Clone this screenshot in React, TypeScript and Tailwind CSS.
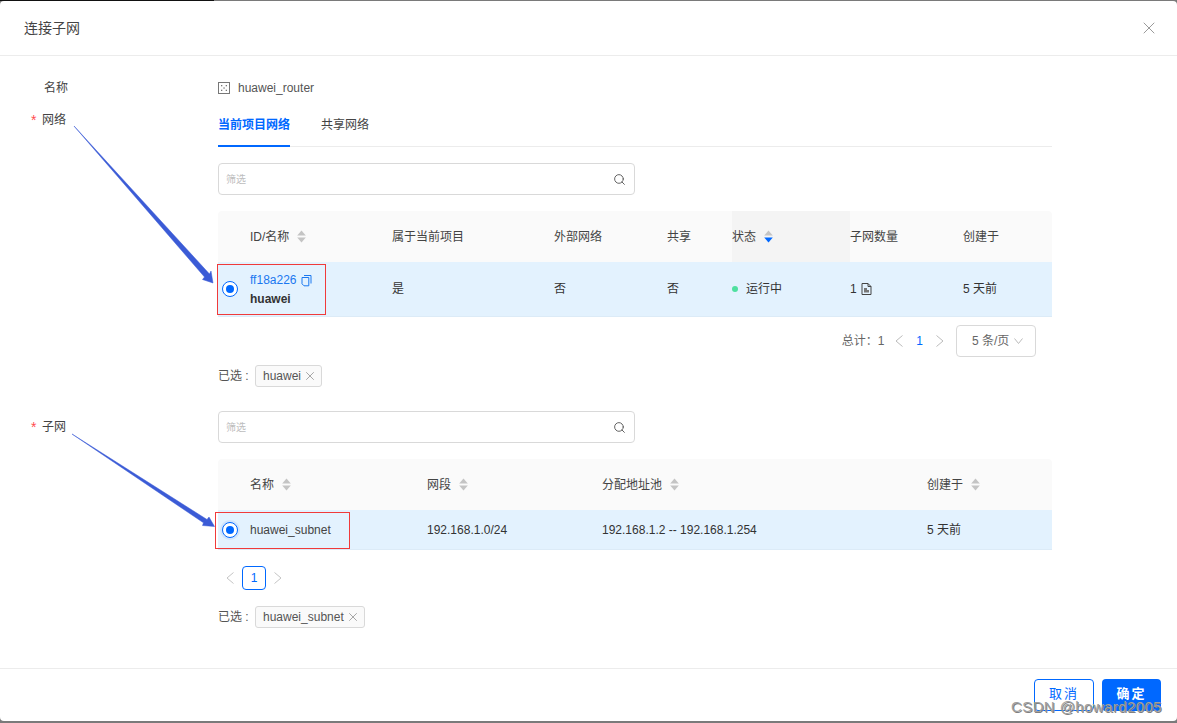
import React from "react";
import { Search, X } from "lucide-react";

const font = "font-['Liberation_Sans','Noto_Sans_CJK_SC',sans-serif]";

function Sort({ active = false }: { active?: boolean }) {
  return (
    <svg width="9" height="13" viewBox="0 0 9 13" className="ml-[8px] shrink-0">
      <path d="M4.5 0.5 L8.8 5.5 L0.2 5.5 Z" fill="#c4c4c4" />
      <path d="M4.5 12.5 L8.8 7.5 L0.2 7.5 Z" fill={active ? "#0068ff" : "#c4c4c4"} />
    </svg>
  );
}

function ChevLeft({ className = "" }: { className?: string }) {
  return (
    <svg width="8" height="12" viewBox="0 0 8 12" fill="none" stroke="currentColor" strokeWidth="1" className={className}>
      <path d="M7.5 0.5 L1 6 L7.5 11.5" />
    </svg>
  );
}

function ChevRight({ className = "" }: { className?: string }) {
  return (
    <svg width="8" height="12" viewBox="0 0 8 12" fill="none" stroke="currentColor" strokeWidth="1" className={className}>
      <path d="M0.5 0.5 L7 6 L0.5 11.5" />
    </svg>
  );
}

function Radio({ halo = false }: { halo?: boolean }) {
  return (
    <span className={`flex h-[20px] w-[20px] items-center justify-center rounded-full ${halo ? "bg-[#cfe4fd]" : ""}`}>
      <span className="flex h-[16px] w-[16px] items-center justify-center rounded-full border border-[#0068ff] bg-white">
        <span className="h-[8px] w-[8px] rounded-full bg-[#0068ff]" />
      </span>
    </span>
  );
}

function SearchBox() {
  return (
    <div className="flex h-[32px] w-[417px] items-center justify-between rounded-[4px] border border-[#d9d9d9] bg-white pl-[7px] pr-[8px]">
      <span className="text-[10px] text-[#bdbdbd]">筛选</span>
      <Search size={13} strokeWidth={1.7} className="text-[#555]" />
    </div>
  );
}

function Tag({ children, w }: { children: React.ReactNode; w: string }) {
  return (
    <div className="flex h-[22px] items-center text-[12px] text-[#555]">
      <span className="mr-[6px] w-[31px]">已选 :</span>
      <span className={`flex h-[22px] items-center justify-between rounded-[3px] border border-[#d9d9d9] bg-[#fafafa] pl-[7px] pr-[4px] ${w}`}>
        {children}
        <X size={14} strokeWidth={1.1} className="text-[#777]" />
      </span>
    </div>
  );
}

function Th({ children, sort, active, className = "" }: { children: React.ReactNode; sort?: boolean; active?: boolean; className?: string }) {
  return (
    <div className={`flex h-full items-center text-[12px] text-[#444] ${className}`}>
      {children}
      {sort && <Sort active={active} />}
    </div>
  );
}

function Label({ children, required, className = "" }: { children: React.ReactNode; required?: boolean; className?: string }) {
  return (
    <div className={`flex items-center text-[12px] text-[#444] ${className}`}>
      {required && <span className="mr-[6px] w-[5px] text-[14px] text-[#ff4d4f]">*</span>}
      {children}
    </div>
  );
}

function Td({ children, className = "" }: { children: React.ReactNode; className?: string }) {
  return <div className={`flex h-full items-center text-[12px] text-[#333] ${className}`}>{children}</div>;
}

export default function App() {
  return (
    <div className={`relative flex h-[723px] w-[1177px] flex-col overflow-hidden bg-[#7a7a7a] pb-[2px] pt-px ${font}`}>
      <div className="absolute left-0 top-0 h-px w-[214px] bg-[#111]" />
      <div className="flex flex-1 flex-col rounded-[4px] bg-white">
        <header className="flex h-[55px] shrink-0 items-center justify-between border-b border-[#ececec] pl-[24px] pr-[18px]">
          <span className="text-[14px] text-[#444]">连接子网</span>
          <X size={20} strokeWidth={0.9} className="text-[#777]" />
        </header>

        <main className="flex flex-1">
          <aside className="relative w-[218px] shrink-0">
            <Label className="ml-[44px] mt-[24px] h-[16px] leading-[16px]">名称</Label>
            <Label required className="ml-[31px] mt-[16px] h-[16px]">网络</Label>
            <Label required className="ml-[31px] mt-[291px] h-[16px]">子网</Label>
          </aside>

          <section className="w-[834px] shrink-0">
            <div className="mt-[24px] flex h-[16px] items-center text-[12px] text-[#555]">
              <svg width="12" height="12" viewBox="0 0 12 12" className="mr-[8px]" fill="none">
                <rect x="0.5" y="0.5" width="11" height="11" stroke="#777" />
                <rect x="3" y="3" width="1.3" height="1.3" fill="#777" />
                <rect x="7.7" y="3" width="1.3" height="1.3" fill="#777" />
                <rect x="5.4" y="5.4" width="1.3" height="1.3" fill="#777" />
                <rect x="3" y="7.7" width="1.3" height="1.3" fill="#777" />
                <rect x="7.7" y="7.7" width="1.3" height="1.3" fill="#777" />
              </svg>
              huawei_router
            </div>

            <div className="mt-[13px] flex h-[38px] border-b border-[#ececec] text-[12px]">
              <div className="-mb-px flex w-[72px] items-center justify-center border-b-2 border-[#0068ff] pb-[5px] font-bold text-[#0068ff]">
                当前项目网络
              </div>
              <div className="ml-[31px] flex items-center pb-[5px] text-[#444]">共享网络</div>
            </div>

            <div className="mt-[16px]">
              <SearchBox />
            </div>

            <div className="mt-[16px]">
              <div className="grid h-[51px] grid-cols-[174px_162px_113px_65px_118px_113px_89px] rounded-t-[4px] bg-[#fafafa]">
                <Th sort className="pl-[32px]">ID/名称</Th>
                <Th>属于当前项目</Th>
                <Th>外部网络</Th>
                <Th>共享</Th>
                <Th sort active className="bg-[#f4f4f4]">状态</Th>
                <Th>子网数量</Th>
                <Th>创建于</Th>
              </div>
              <div className="grid h-[55px] grid-cols-[174px_162px_113px_65px_118px_113px_89px] border-b border-[#dcebf7] bg-[#e3f2fe]">
                <Td>
                  <span className="ml-[2px] mr-[10px]"><Radio /></span>
                  <div className="mt-px leading-[19px]">
                    <div className="flex items-center text-[#1a78f0]">
                      ff18a226
                      <svg width="11" height="13" viewBox="0 0 11 13" fill="none" className="ml-[4px]" stroke="#1a78f0">
                        <path d="M3 1.5 H10 V9.5" />
                        <path d="M1 3.5 H7.8 V11.8 H3 L1 9.8 Z" />
                      </svg>
                    </div>
                    <div className="font-bold text-[#333]">huawei</div>
                  </div>
                </Td>
                <Td>是</Td>
                <Td>否</Td>
                <Td>否</Td>
                <Td>
                  <span className="mr-[8px] h-[6px] w-[6px] rounded-full bg-[#4fe0a0]" />
                  运行中
                </Td>
                <Td>
                  1
                  <svg width="11" height="12" viewBox="0 0 11 12" fill="none" className="ml-[4px]" stroke="#444">
                    <path d="M1 0.5 H7 L10 3.5 V11.5 H1 Z" />
                    <path d="M7 0.5 V3.5 H10" />
                    <path d="M3 5 H6 V7 H8 V9.5 H3 Z" fill="#777" stroke="none" />
                  </svg>
                </Td>
                <Td>5 天前</Td>
              </div>
            </div>

            <div className="mt-[8px] flex h-[32px] items-center justify-end pr-[16px] text-[12px] text-[#666]">
              <span>总计：1</span>
              <ChevLeft className="ml-[11px] text-[#bbb]" />
              <span className="ml-[13px] text-[#0068ff]">1</span>
              <ChevRight className="ml-[13px] text-[#bbb]" />
              <div className="ml-[12px] flex h-[32px] w-[80px] items-center justify-between rounded-[4px] border border-[#d9d9d9] pl-[15px] pr-[12px]">
                5 条/页
                <svg width="9" height="6" viewBox="0 0 9 6" fill="none" stroke="#bbb" strokeWidth="1">
                  <path d="M0.5 0.5 L4.5 5.5 L8.5 0.5" />
                </svg>
              </div>
            </div>

            <div className="mt-[8px]">
              <Tag w="w-[67px]">huawei</Tag>
            </div>

            <div className="mt-[24px]">
              <SearchBox />
            </div>

            <div className="mt-[16px]">
              <div className="grid h-[51px] grid-cols-[209px_175px_325px_125px] rounded-t-[4px] bg-[#fafafa]">
                <Th sort className="pl-[32px]">名称</Th>
                <Th sort>网段</Th>
                <Th sort>分配地址池</Th>
                <Th sort>创建于</Th>
              </div>
              <div className="grid h-[40px] grid-cols-[209px_175px_325px_125px] border-b border-[#dcebf7] bg-[#e3f2fe]">
                <Td>
                  <span className="ml-[2px] mr-[10px]"><Radio halo /></span>
                  <span className="text-[#444]">huawei_subnet</span>
                </Td>
                <Td>192.168.1.0/24</Td>
                <Td>192.168.1.2 -- 192.168.1.254</Td>
                <Td>5 天前</Td>
              </div>
            </div>

            <div className="ml-[8px] mt-[16px] flex h-[24px] items-center text-[12px]">
              <ChevLeft className="text-[#c4c4c4]" />
              <span className="ml-[8px] flex h-[24px] w-[24px] items-center justify-center rounded-[4px] border border-[#0068ff] text-[#0068ff]">1</span>
              <ChevRight className="ml-[8px] text-[#c4c4c4]" />
            </div>

            <div className="mt-[16px]">
              <Tag w="w-[110px]">huawei_subnet</Tag>
            </div>
          </section>
        </main>

        <footer className="flex h-[53px] shrink-0 justify-end gap-[8px] border-t border-[#ececec] pr-[16px] pt-[10px] text-[13px]">
          <button className="h-[32px] w-[60px] rounded-[4px] border border-[#0068ff] bg-white pb-[3px] tracking-[2px] text-[#0068ff]">取消</button>
          <button className="h-[32px] w-[59px] rounded-[4px] bg-[#0068ff] pb-[3px] font-bold tracking-[2px] text-white">确定</button>
        </footer>
      </div>

      {/* annotations over the page */}
      <svg className="pointer-events-none absolute left-0 top-0" width="1177" height="723">
        <path d="M74 126 L209.5 274 L211 271 L213 283 L202.5 279.5 L204.5 277 Z" fill="#3b5bd6" stroke="#3b5bd6" strokeWidth="0.5" />
        <path d="M72 434 L207 519.5 L209 517 L214.5 526.5 L202.5 525.5 L203.5 522.8 Z" fill="#3b5bd6" stroke="#3b5bd6" strokeWidth="0.5" />
      </svg>
      <div className="absolute left-[217px] top-[264px] h-[51px] w-[109px] border border-[#f03a3a]" />
      <div className="absolute left-[215px] top-[512px] h-[37px] w-[135px] border border-[#f03a3a]" />
      <div className="absolute left-[1011px] top-[698px] text-[15px] leading-[18px] tracking-[0.4px] text-[#a0a0a0] [text-shadow:1px_1px_0_#808080]">
        CSDN @howard2005
      </div>
    </div>
  );
}
